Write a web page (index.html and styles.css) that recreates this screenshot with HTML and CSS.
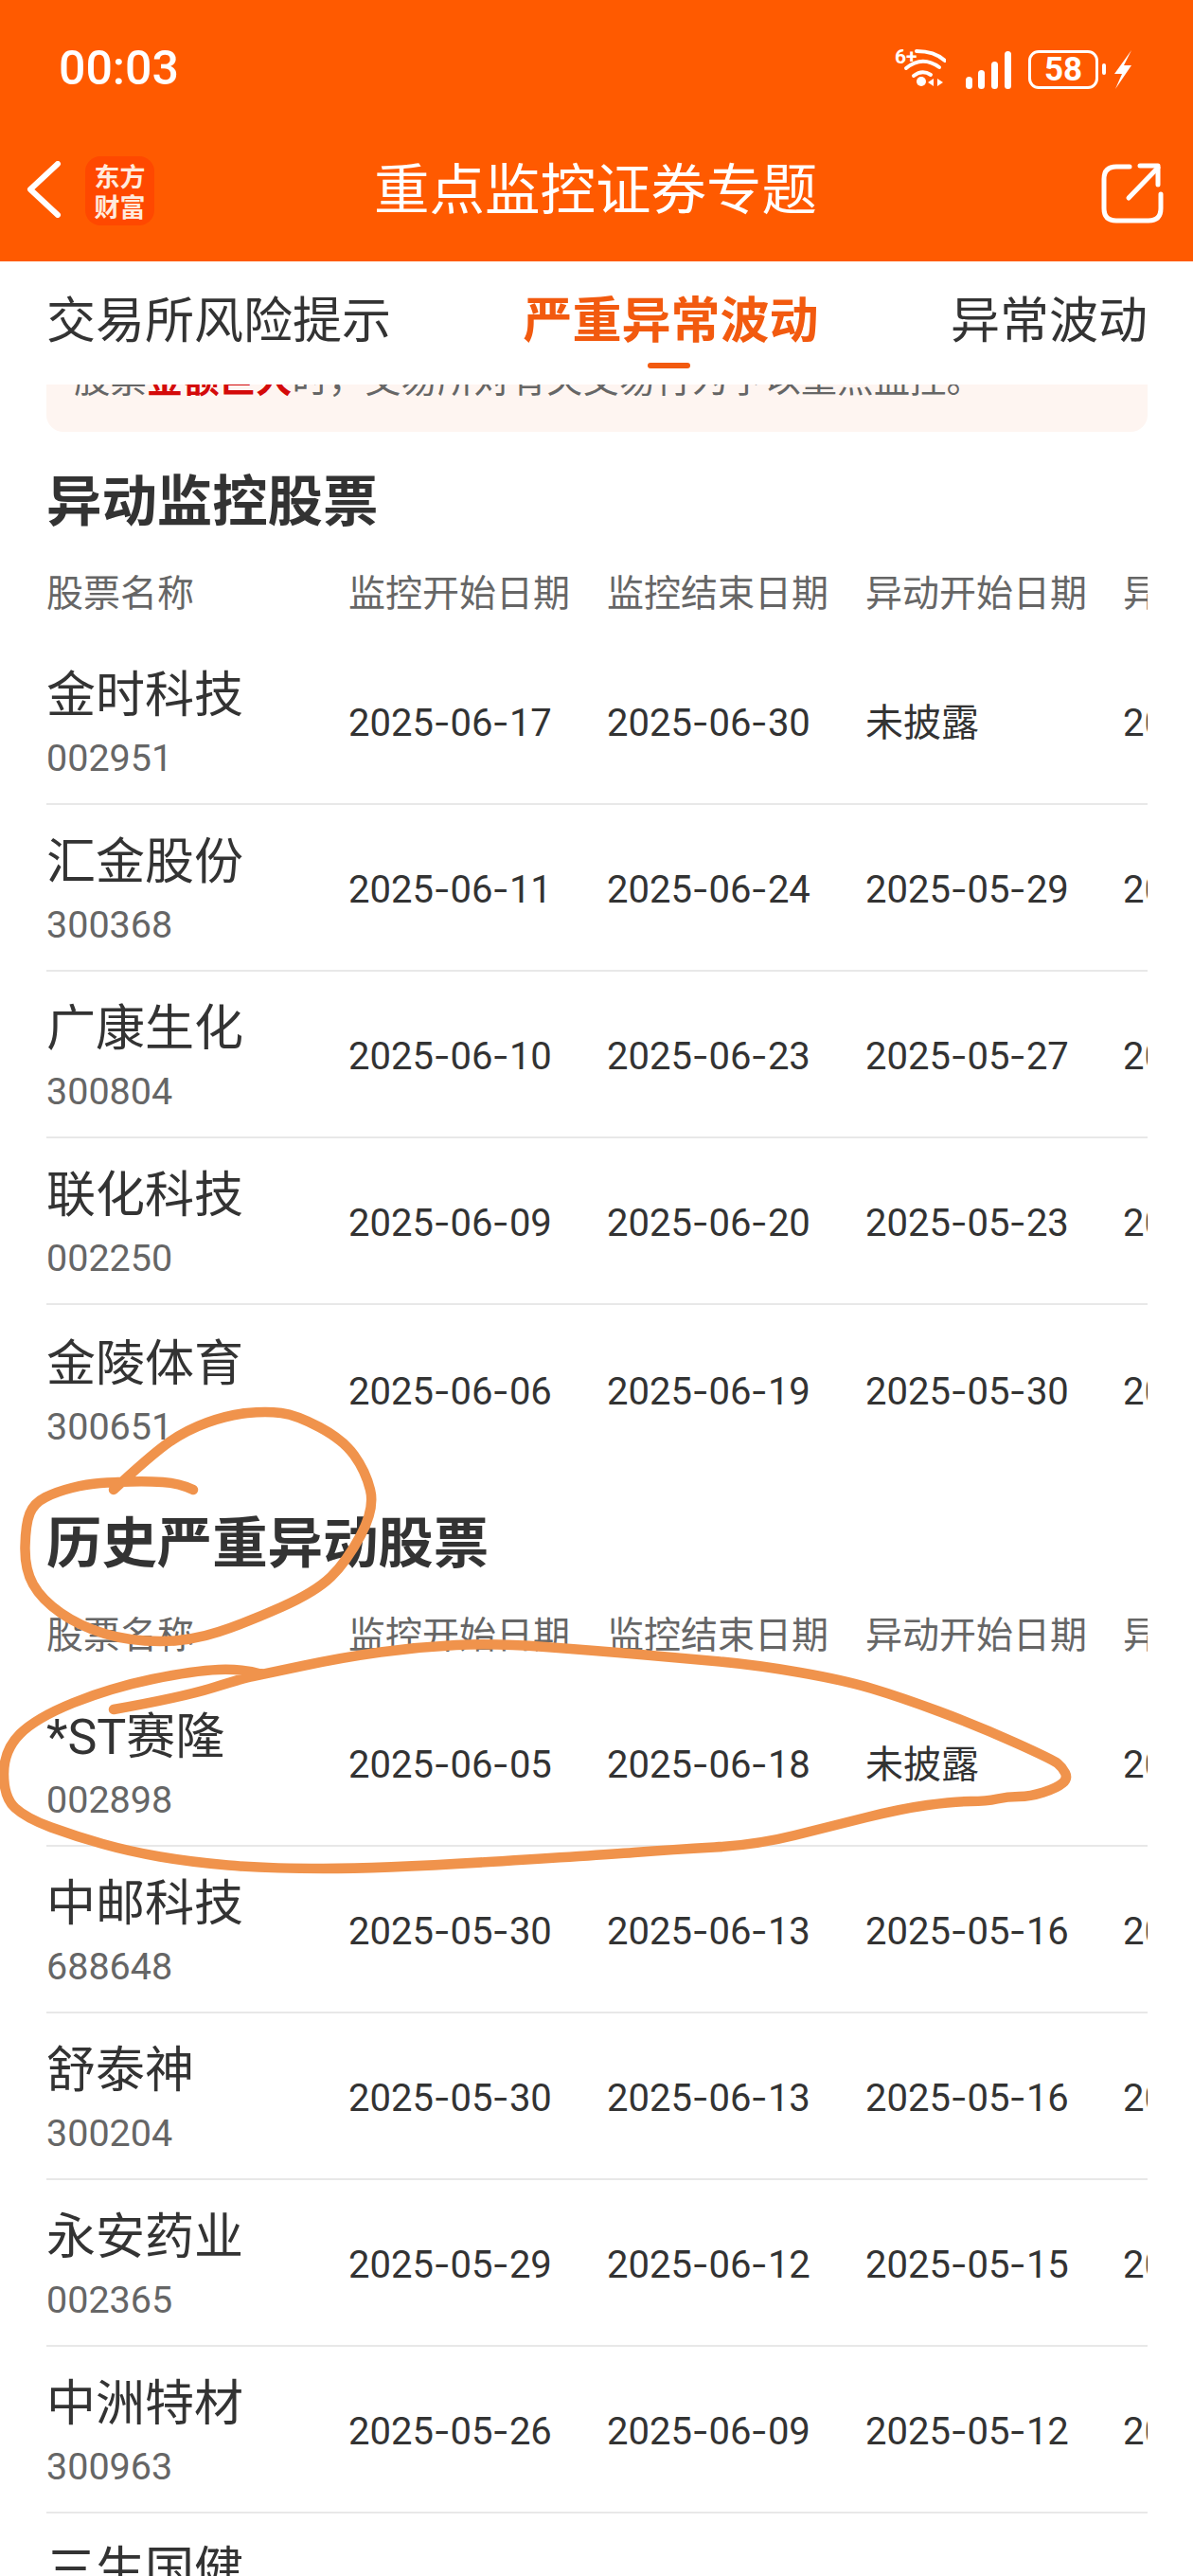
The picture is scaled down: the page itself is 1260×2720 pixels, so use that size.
FILE: index.html
```html
<!DOCTYPE html>
<html lang="zh-CN">
<head>
  <meta charset="UTF-8">
  <meta name="viewport" content="width=device-width, initial-scale=1.0">
  <title>重点监控证券专题</title>
  <link rel="stylesheet" href="styles.css">
</head>
<body>
  <div class="page">
    <header class="app-header">
      <div class="status-bar">
        <span class="time">00:03</span>
        <div class="status-icons">
          <svg class="icon-wifi" viewBox="0 0 54 44" width="54" height="44" fill="none" stroke="#fff" stroke-linecap="round">
            <text x="0" y="16" class="wifi-label">6+</text>
            <path d="M23 3 Q42 3 53 13" stroke-width="4"/>
            <path d="M12 21 Q29 7 47 20" stroke-width="4"/>
            <path d="M20 29 Q29 22 38 28" stroke-width="4"/>
            <circle cx="28" cy="35" r="5" fill="#fff" stroke="none"/>
            <path d="M41 32 L35 36 L41 40 Z M45 32 L51 36 L45 40 Z" fill="#fff" stroke="none"/>
          </svg>
          <svg class="icon-signal" viewBox="0 0 48 40" width="48" height="40" fill="#fff">
            <rect x="0" y="27" width="7" height="13" rx="3.5"/>
            <rect x="13" y="20" width="7" height="20" rx="3.5"/>
            <rect x="27" y="11" width="7" height="29" rx="3.5"/>
            <rect x="41" y="0" width="7" height="40" rx="3.5"/>
          </svg>
          <div class="battery"><span>58</span></div>
          <svg class="icon-bolt" viewBox="0 0 18 41" width="18" height="41" fill="#fff">
            <path d="M18 0 L0 25 L8 25 L1 41 L18 16 L10 16 Z"/>
          </svg>
        </div>
      </div>
      <nav class="nav-bar">
        <svg class="icon-back" viewBox="0 0 38 60" width="38" height="60" fill="none" stroke="#fff" stroke-width="6" stroke-linecap="round" stroke-linejoin="round">
          <path d="M33 3 L4 30 L33 57"/>
        </svg>
        <div class="logo">东方<br>财富</div>
        <h1 class="nav-title">重点监控证券专题</h1>
        <svg class="icon-share" viewBox="0 0 66 64" width="66" height="64" fill="none" stroke="#fff" stroke-width="5" stroke-linecap="round" stroke-linejoin="round">
          <path d="M30 4 H16 Q3 4 3 17 V48 Q3 61 16 61 H50 Q63 61 63 48 V33"/>
          <path d="M29 37 L60 5"/>
          <path d="M41 3 H60 V23"/>
        </svg>
      </nav>
    </header>

    <div class="tabs">
      <span class="tab">交易所风险提示</span>
      <span class="tab tab-active">严重异常波动</span>
      <span class="tab">异常波动</span>
    </div>

    <main class="content">
      <div class="notice">
        <p>股票<b>金额巨大</b>时，交易所对有关交易行为予以重点监控。</p>
      </div>

      <h2 class="section-title">异动监控股票</h2>
      <div class="stock-table">
        <div class="table-head">
          <span>股票名称</span><span>监控开始日期</span><span>监控结束日期</span><span>异动开始日期</span><span>异动结束日期</span>
        </div>
        <div class="table-row">
          <div class="stock"><span class="stock-name">金时科技</span><span class="stock-code">002951</span></div>
          <span class="cell">2025<i>-</i>06<i>-</i>17</span><span class="cell">2025<i>-</i>06<i>-</i>30</span><span class="cell">未披露</span><span class="cell">2025<i>-</i>06<i>-</i>16</span>
        </div>
        <div class="table-row">
          <div class="stock"><span class="stock-name">汇金股份</span><span class="stock-code">300368</span></div>
          <span class="cell">2025<i>-</i>06<i>-</i>11</span><span class="cell">2025<i>-</i>06<i>-</i>24</span><span class="cell">2025<i>-</i>05<i>-</i>29</span><span class="cell">2025<i>-</i>06<i>-</i>10</span>
        </div>
        <div class="table-row">
          <div class="stock"><span class="stock-name">广康生化</span><span class="stock-code">300804</span></div>
          <span class="cell">2025<i>-</i>06<i>-</i>10</span><span class="cell">2025<i>-</i>06<i>-</i>23</span><span class="cell">2025<i>-</i>05<i>-</i>27</span><span class="cell">2025<i>-</i>06<i>-</i>09</span>
        </div>
        <div class="table-row">
          <div class="stock"><span class="stock-name">联化科技</span><span class="stock-code">002250</span></div>
          <span class="cell">2025<i>-</i>06<i>-</i>09</span><span class="cell">2025<i>-</i>06<i>-</i>20</span><span class="cell">2025<i>-</i>05<i>-</i>23</span><span class="cell">2025<i>-</i>06<i>-</i>06</span>
        </div>
        <div class="table-row table-row-last">
          <div class="stock"><span class="stock-name">金陵体育</span><span class="stock-code">300651</span></div>
          <span class="cell">2025<i>-</i>06<i>-</i>06</span><span class="cell">2025<i>-</i>06<i>-</i>19</span><span class="cell">2025<i>-</i>05<i>-</i>30</span><span class="cell">2025<i>-</i>06<i>-</i>05</span>
        </div>
      </div>

      <h2 class="section-title section-title-next">历史严重异动股票</h2>
      <div class="stock-table">
        <div class="table-head">
          <span>股票名称</span><span>监控开始日期</span><span>监控结束日期</span><span>异动开始日期</span><span>异动结束日期</span>
        </div>
        <div class="table-row">
          <div class="stock"><span class="stock-name">*ST赛隆</span><span class="stock-code">002898</span></div>
          <span class="cell">2025<i>-</i>06<i>-</i>05</span><span class="cell">2025<i>-</i>06<i>-</i>18</span><span class="cell">未披露</span><span class="cell">2025<i>-</i>06<i>-</i>04</span>
        </div>
        <div class="table-row">
          <div class="stock"><span class="stock-name">中邮科技</span><span class="stock-code">688648</span></div>
          <span class="cell">2025<i>-</i>05<i>-</i>30</span><span class="cell">2025<i>-</i>06<i>-</i>13</span><span class="cell">2025<i>-</i>05<i>-</i>16</span><span class="cell">2025<i>-</i>05<i>-</i>29</span>
        </div>
        <div class="table-row">
          <div class="stock"><span class="stock-name">舒泰神</span><span class="stock-code">300204</span></div>
          <span class="cell">2025<i>-</i>05<i>-</i>30</span><span class="cell">2025<i>-</i>06<i>-</i>13</span><span class="cell">2025<i>-</i>05<i>-</i>16</span><span class="cell">2025<i>-</i>05<i>-</i>29</span>
        </div>
        <div class="table-row">
          <div class="stock"><span class="stock-name">永安药业</span><span class="stock-code">002365</span></div>
          <span class="cell">2025<i>-</i>05<i>-</i>29</span><span class="cell">2025<i>-</i>06<i>-</i>12</span><span class="cell">2025<i>-</i>05<i>-</i>15</span><span class="cell">2025<i>-</i>05<i>-</i>28</span>
        </div>
        <div class="table-row">
          <div class="stock"><span class="stock-name">中洲特材</span><span class="stock-code">300963</span></div>
          <span class="cell">2025<i>-</i>05<i>-</i>26</span><span class="cell">2025<i>-</i>06<i>-</i>09</span><span class="cell">2025<i>-</i>05<i>-</i>12</span><span class="cell">2025<i>-</i>05<i>-</i>23</span>
        </div>
        <div class="table-row">
          <div class="stock"><span class="stock-name">三生国健</span><span class="stock-code">688336</span></div>
          <span class="cell">2025<i>-</i>05<i>-</i>23</span><span class="cell">2025<i>-</i>06<i>-</i>06</span><span class="cell">2025<i>-</i>05<i>-</i>09</span><span class="cell">2025<i>-</i>05<i>-</i>22</span>
        </div>
      </div>
    </main>

    <!-- hand drawn marks on top of the screenshot -->
    <svg class="scribble" viewBox="0 0 1260 2720" width="1260" height="2720" fill="none" stroke="#f0934c" stroke-width="10.500" stroke-linecap="round" stroke-linejoin="round">
      <path d="M204 1573 Q189 1566 172 1565 Q155 1564 137.500 1564.500 Q120 1565 106 1566 Q92 1567 76 1571 Q60 1575 48 1581 Q36 1587 31.500 1598 Q27 1609 26.500 1633 Q26 1657 35 1673 Q44 1689 64 1703 Q84 1717 110.500 1725 Q137 1733 169 1733 Q201 1733 231 1723 Q261 1713 297 1697 Q333 1681 349.500 1665 Q366 1649 381 1621 Q396 1593 391 1573 Q386 1553 374 1536.500 Q362 1520 337.500 1507 Q313 1494 297 1492 Q281 1490 261 1492 Q241 1494 219 1502 Q197 1510 179 1522.500 Q161 1535 120 1573"/>
      <path d="M120 1805 Q193 1792 225 1782 Q257 1772 267 1770 Q277 1768 319.500 1759 Q362 1750 402 1744.500 Q442 1739 482 1737 Q522 1735 576 1739 Q630 1743 676 1747 Q722 1751 760.500 1754.500 Q799 1758 845 1766 Q891 1774 921 1783 Q951 1792 991.500 1807 Q1032 1822 1072 1840 Q1112 1858 1117 1862 Q1122 1866 1125 1872 Q1128 1878 1122 1883 Q1116 1888 1102 1892.500 Q1088 1897 1076 1897 Q1064 1897 1053 1899.500 Q1042 1902 1025 1902 Q1008 1902 979.500 1906 Q951 1910 915 1919 Q879 1928 839 1938 Q799 1948 754.500 1950.500 Q710 1953 670 1956 Q630 1959 516 1966 Q402 1973 341.500 1973 Q281 1973 241 1969.500 Q201 1966 169 1960.500 Q137 1955 108.500 1947 Q80 1939 54 1929.500 Q28 1920 16 1909 Q4 1898 4 1873 Q4 1848 21 1831 Q38 1814 77.500 1798 Q117 1782 161 1773 Q205 1764 231 1763 Q257 1762 277 1768"/>
    </svg>
  </div>
</body>
</html>
```

FILE: styles.css
```css
body {
  margin: 0;
  padding: 0;
  font-family: Roboto, "Noto Sans CJK SC", sans-serif;
  background-color: #fff;
  color: #333;
}

.page {
  position: relative;
  width: 1260px;
  height: 2720px;
  overflow: hidden;
}

/* orange header */
.app-header {
  background-color: #ff5a00;
  color: #fff;
}

.status-bar {
  display: flex;
  justify-content: space-between;
  align-items: center;
  height: 104px;
  padding: 20px 65px 0 62px;
}

.time {
  font-size: 50px;
  font-weight: 500;
}

.status-icons {
  display: flex;
  align-items: center;
  margin-top: 2px;
}

.wifi-label {
  font-size: 21px;
  font-weight: 700;
  fill: #fff;
  stroke: none;
}

.icon-signal {
  margin-left: 21px;
  margin-top: 2px;
}

.battery {
  position: relative;
  display: flex;
  justify-content: center;
  align-items: center;
  box-sizing: border-box;
  width: 74px;
  height: 41px;
  margin-left: 18px;
  border: 3px solid #fff;
  border-radius: 11px;
  font-size: 35px;
  font-weight: 700;
}

.battery::after {
  content: "";
  position: absolute;
  right: -11px;
  top: 11px;
  width: 4px;
  height: 12px;
  border-radius: 2px;
  background-color: #fff;
}

.icon-bolt {
  margin-left: 17px;
}

.nav-bar {
  position: relative;
  display: flex;
  align-items: center;
  height: 152px;
}

.icon-back {
  margin-left: 28px;
}

.logo {
  box-sizing: border-box;
  width: 73px;
  height: 73px;
  margin-left: 24px;
  margin-top: 3px;
  padding-top: 5px;
  border-radius: 16px;
  background-color: #ff4800;
  color: #ffeadd;
  font-family: "Noto Sans CJK SC", sans-serif;
  font-size: 27px;
  font-weight: 700;
  line-height: 32px;
  text-align: center;
}

.nav-title {
  margin: -8px 0 0 232px;
  font-family: "Noto Sans CJK SC", sans-serif;
  font-size: 58.500px;
  font-weight: 400;
  line-height: 72px;
  white-space: nowrap;
}

.icon-share {
  margin-left: auto;
  margin-right: 31px;
  margin-top: 8px;
}

/* tabs */
.tabs {
  display: flex;
  justify-content: space-between;
  box-sizing: border-box;
  height: 130px;
  padding: 27px 48px 0 49px;
  font-family: "Noto Sans CJK SC", sans-serif;
  font-size: 52px;
  line-height: 64px;
  white-space: nowrap;
}

.tab {
  position: relative;
  color: #333;
}

.tab-active {
  color: #f25a0f;
  font-weight: 700;
}

.tab-active::after {
  content: "";
  position: absolute;
  left: 132px;
  top: 80px;
  width: 45px;
  height: 6px;
  border-radius: 3px;
  background-color: #f25a0f;
}

/* scrolled content */
.notice {
  height: 50px;
  margin: 0 48px 0 49px;
  overflow: hidden;
  border-radius: 0 0 18px 18px;
  background-color: #fef5f1;
}

.notice p {
  margin: -34px 0 0 29px;
  font-family: "Noto Sans CJK SC", sans-serif;
  font-size: 38.400px;
  line-height: 50px;
  color: #666;
  white-space: nowrap;
}

.notice b {
  color: #d40a0a;
}

.section-title {
  margin: 33px 48px 0 49px;
  font-family: "Noto Sans CJK SC", sans-serif;
  font-size: 58.400px;
  font-weight: 700;
  line-height: 72px;
}

.section-title-next {
  margin-top: 34px;
}

.stock-table {
  margin: 0 48px 0 49px;
  overflow: hidden;
}

.table-head,
.table-row {
  display: grid;
  grid-template-columns: 319px 273px 273px 272px 273px;
  width: 1410px;
}

.table-head {
  box-sizing: border-box;
  height: 113px;
  padding-top: 40px;
  color: #666;
  font-family: "Noto Sans CJK SC", sans-serif;
  font-size: 39px;
  line-height: 44px;
  white-space: nowrap;
}

.table-row {
  box-sizing: border-box;
  height: 176px;
  align-items: center;
  border-bottom: 2px solid #e8e8e8;
}

.table-row-last {
  height: 177px;
  border-bottom: none;
}

.stock {
  display: flex;
  flex-direction: column;
  margin-top: 6px;
}

.stock-name {
  font-size: 52px;
  line-height: 60px;
}

.stock-code {
  margin-top: 14px;
  color: #666;
  font-size: 39.500px;
  line-height: 44px;
}

.cell {
  padding-top: 6px;
  font-size: 40px;
  line-height: 50px;
  white-space: nowrap;
}

/* the app's date hyphen is wider than Roboto's */
.cell i {
  display: inline-block;
  width: 17.500px;
  font-style: normal;
  text-align: center;
  transform: scaleX(1.3);
}

/* marker strokes over the page */
.scribble {
  position: absolute;
  left: 0;
  top: 0;
  pointer-events: none;
}
```
